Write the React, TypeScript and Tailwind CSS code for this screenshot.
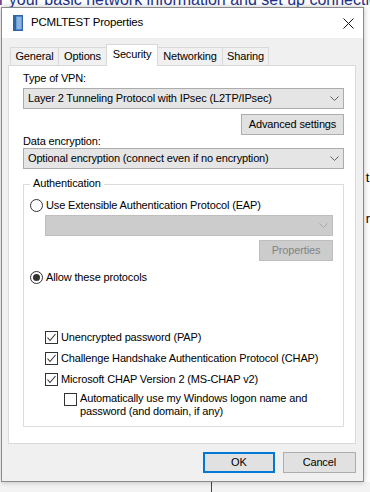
import React from "react";

const Chevron = ({ color = "#606060" }: { color?: string }) => (
  <svg width="9" height="5" viewBox="0 0 9 5" className="block">
    <path d="M0.5 0.5 L4.5 4.5 L8.5 0.5" fill="none" stroke={color} strokeWidth="1" />
  </svg>
);

const CheckBox = ({ checked }: { checked: boolean }) => (
  <div className="w-[13px] h-[13px] border border-[#333333] bg-white flex items-center justify-center shrink-0">
    {checked && (
      <svg width="11" height="11" viewBox="0 0 11 11" className="block">
        <path d="M1.5 5.5 L4 8.5 L9.5 2" fill="none" stroke="#333333" strokeWidth="1.1" />
      </svg>
    )}
  </div>
);

const Radio = ({ checked }: { checked: boolean }) => (
  <div className="w-[13px] h-[13px] rounded-full border border-[#333333] bg-white flex items-center justify-center shrink-0">
    {checked && <div className="w-[7px] h-[7px] rounded-full bg-[#333333]" />}
  </div>
);

const Combo = ({ text, disabled = false, w }: { text: string; disabled?: boolean; w: string }) => (
  <div
    className={`${w} h-[21px] border flex items-center justify-between pl-[4px] pr-[4px] ${
      disabled ? "bg-[#cccccc] border-[#bfbfbf]" : "bg-[#e5e5e5] border-[#acacac]"
    }`}
  >
    <span className="whitespace-nowrap">{text}</span>
    <Chevron color={disabled ? "#a8a8a8" : "#606060"} />
  </div>
);

const Tab = ({ label, w, selected = false }: { label: string; w: string; selected?: boolean }) =>
  selected ? (
    <div className={`${w} h-[22px] -mb-px relative z-10 bg-white border-t border-l border-r border-[#d9d9d9] -ml-px flex items-center justify-center pb-[2px]`}>
      {label}
    </div>
  ) : (
    <div className={`${w} h-[18px] bg-[#f0f0f0] border-t border-l border-r border-[#d9d9d9] -ml-px flex items-center justify-center first:ml-0`}>
      {label}
    </div>
  );

export default function App() {
  return (
    <div
      className="w-[370px] h-[492px] bg-white overflow-hidden flex flex-col text-[11px] text-black tracking-[-0.15px]"
      style={{ fontFamily: '"Liberation Sans", Arial, sans-serif' }}
    >
      {/* background window heading, cut off */}
      <div className="h-[7px] overflow-hidden shrink-0">
        <div className="-mt-[8px] -ml-[1px] text-[16px] leading-[16px] text-[#1e3287] whitespace-nowrap tracking-normal">
          r your basic network information and set up connections
        </div>
      </div>

      <div className="flex h-[475px] shrink-0 pl-px">
        {/* dialog */}
        <div className="w-[363px] h-[475px] border border-[#8a8a8a] flex flex-col shadow-[0_0_6px_rgba(0,0,0,0.25)] relative z-10">
          {/* title bar */}
          <div className="h-[30px] bg-white flex items-center pl-[11px] pr-[9px] shrink-0">
            <svg width="10" height="16" viewBox="0 0 10 16" className="block">
              <rect x="0.5" y="0.5" width="9" height="15" fill="#4a86c9" stroke="#2f64a8" />
              <rect x="1" y="1" width="2" height="14" fill="#2f64a8" />
              <line x1="3.5" y1="3" x2="8.5" y2="3" stroke="#cfe1f5" />
              <line x1="3.5" y1="5" x2="8.5" y2="5" stroke="#cfe1f5" />
              <line x1="3.5" y1="7" x2="8.5" y2="7" stroke="#cfe1f5" />
              <line x1="3.5" y1="9" x2="8.5" y2="9" stroke="#cfe1f5" />
              <line x1="3.5" y1="11" x2="8.5" y2="11" stroke="#cfe1f5" />
              <line x1="3.5" y1="13" x2="8.5" y2="13" stroke="#cfe1f5" />
            </svg>
            <span className="ml-[8px] text-[11.5px] tracking-[-0.2px]">PCMLTEST Properties</span>
            <div className="flex-1" />
            <svg width="11" height="11" viewBox="0 0 11 11" className="block">
              <path d="M0.5 0.5 L10.5 10.5 M10.5 0.5 L0.5 10.5" stroke="#111111" strokeWidth="1" />
            </svg>
          </div>

          {/* body */}
          <div className="flex-1 bg-[#f0f0f0] pt-[6px] pl-[6px] pr-[7px] pb-[8px] flex flex-col">
            {/* tabs */}
            <div className="h-[21px] flex items-end pl-[2px]">
              <Tab label="General" w="w-[49px]" />
              <Tab label="Options" w="w-[49px]" />
              <Tab label="Security" w="w-[52px]" selected />
              <Tab label="Networking" w="w-[66px]" />
              <Tab label="Sharing" w="w-[47px]" />
            </div>

            {/* panel */}
            <div className="h-[379px] bg-white border border-[#d9d9d9] pl-[14px] pt-[5px] flex flex-col">
              <div className="h-[15px] leading-[15px]">Type of VPN:</div>
              <div className="mt-[2px]">
                <Combo w="w-[321px]" text="Layer 2 Tunneling Protocol with IPsec (L2TP/IPsec)" />
              </div>
              <div className="mt-[5px] w-[321px] flex justify-end">
                <div className="w-[103px] h-[21px] bg-[#e1e1e1] border border-[#adadad] flex items-center justify-center">
                  Advanced settings
                </div>
              </div>
              <div className="h-[13px] leading-[13px]">Data encryption:</div>
              <Combo w="w-[321px]" text="Optional encryption (connect even if no encryption)" />

              {/* group box */}
              <div className="mt-[15px] w-[321px] h-[243px] border border-[#dcdcdc] relative flex flex-col">
                <span className="absolute left-[6px] -top-[8px] bg-white px-[3px] leading-[13px]">Authentication</span>

                <div className="mt-[13px] h-[15px] flex items-center pl-[6px]">
                  <Radio checked={false} />
                  <span className="ml-[3px]">Use Extensible Authentication Protocol (EAP)</span>
                </div>
                <div className="mt-[2px] ml-[21px]">
                  <Combo w="w-[288px]" text="" disabled />
                </div>
                <div className="mt-[4px] ml-[21px] w-[288px] flex justify-end">
                  <div className="w-[74px] h-[21px] bg-[#cccccc] border border-[#bfbfbf] text-[#838383] flex items-center justify-center">
                    Properties
                  </div>
                </div>
                <div className="mt-[9px] h-[15px] flex items-center pl-[6px]">
                  <Radio checked />
                  <span className="ml-[3px]">Allow these protocols</span>
                </div>

                <div className="mt-[45px] h-[15px] flex items-center pl-[21px]">
                  <CheckBox checked />
                  <span className="ml-[3px]">Unencrypted password (PAP)</span>
                </div>
                <div className="mt-[6px] h-[15px] flex items-center pl-[21px]">
                  <CheckBox checked />
                  <span className="ml-[3px]">Challenge Handshake Authentication Protocol (CHAP)</span>
                </div>
                <div className="mt-[6px] h-[15px] flex items-center pl-[21px]">
                  <CheckBox checked />
                  <span className="ml-[3px]">Microsoft CHAP Version 2 (MS-CHAP v2)</span>
                </div>
                <div className="mt-[5px] flex items-start pl-[40px]">
                  <div className="mt-px">
                    <CheckBox checked={false} />
                  </div>
                  <div className="ml-[3px] leading-[13px]">
                    <div>Automatically use my Windows logon name and</div>
                    <div>password (and domain, if any)</div>
                  </div>
                </div>
              </div>
            </div>

            {/* buttons */}
            <div className="mt-[8px] h-[21px] flex justify-end gap-[8px]">
              <div className="w-[72px] h-[21px] bg-[#e1e1e1] border-2 border-[#0078d7] flex items-center justify-center">
                OK
              </div>
              <div className="w-[73px] h-[21px] bg-[#e1e1e1] border border-[#adadad] flex items-center justify-center">
                Cancel
              </div>
            </div>
          </div>
        </div>

        {/* background window to the right */}
        <div className="flex-1 flex flex-col pl-[2px] text-[13px] leading-[13px]">
          <div className="h-[164px]" />
          <div>t</div>
          <div className="h-[28px]" />
          <div>r</div>
        </div>
      </div>

      {/* below dialog */}
      <div className="flex-1 bg-[#f3f3f3] flex">
        <div className="w-[211px]" />
        <div className="w-px bg-[#444444]" />
      </div>
    </div>
  );
}
